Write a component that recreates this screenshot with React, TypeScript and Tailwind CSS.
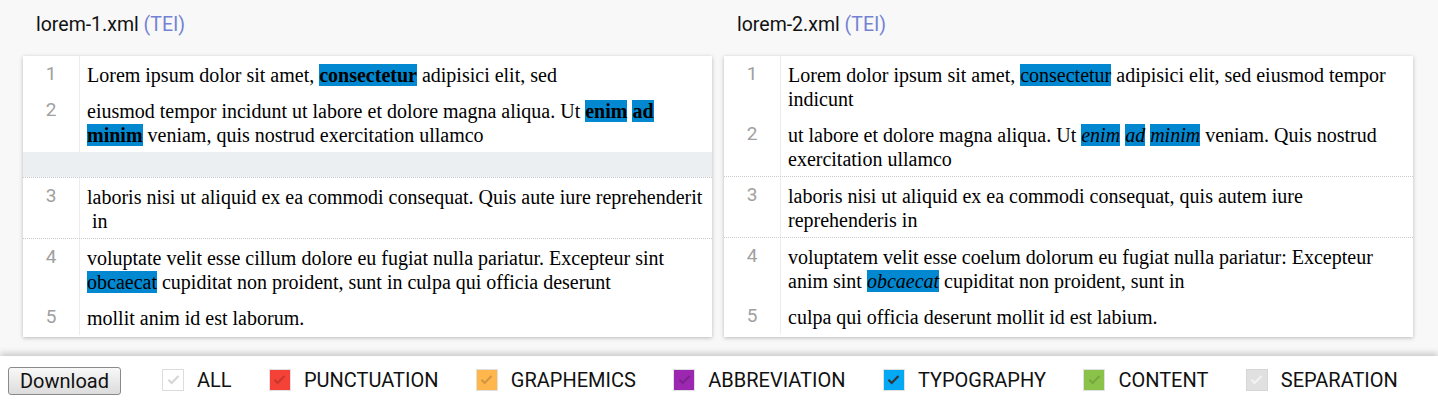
import React from "react";

type Seg = { t: string; hl?: "b" | "i" | "n" };
type Row = { n: number; lines: Seg[][] };
type Group = { rows: Row[]; spacer?: boolean };

const left: Group[] = [
  {
    spacer: true,
    rows: [
      {
        n: 1,
        lines: [[{ t: "Lorem ipsum dolor sit amet, " }, { t: "consectetur", hl: "b" }, { t: " adipisici elit, sed" }]],
      },
      {
        n: 2,
        lines: [
          [
            { t: "eiusmod tempor incidunt ut labore et dolore magna aliqua. Ut " },
            { t: "enim", hl: "b" },
            { t: " " },
            { t: "ad", hl: "b" },
          ],
          [{ t: "minim", hl: "b" }, { t: " veniam, quis nostrud exercitation ullamco" }],
        ],
      },
    ],
  },
  {
    rows: [
      {
        n: 3,
        lines: [
          [{ t: "laboris nisi ut aliquid ex ea commodi consequat. Quis aute iure reprehenderit" }],
          [{ t: "\u00a0in" }],
        ],
      },
    ],
  },
  {
    rows: [
      {
        n: 4,
        lines: [
          [{ t: "voluptate velit esse cillum dolore eu fugiat nulla pariatur. Excepteur sint" }],
          [{ t: "obcaecat", hl: "n" }, { t: " cupiditat non proident, sunt in culpa qui officia deserunt" }],
        ],
      },
      { n: 5, lines: [[{ t: "mollit anim id est laborum." }]] },
    ],
  },
];

const right: Group[] = [
  {
    rows: [
      {
        n: 1,
        lines: [
          [
            { t: "Lorem dolor ipsum sit amet, " },
            { t: "consectetur", hl: "n" },
            { t: " adipisici elit, sed eiusmod tempor" },
          ],
          [{ t: "indicunt" }],
        ],
      },
      {
        n: 2,
        lines: [
          [
            { t: "ut labore et dolore magna aliqua. Ut " },
            { t: "enim", hl: "i" },
            { t: " " },
            { t: "ad", hl: "i" },
            { t: " " },
            { t: "minim", hl: "i" },
            { t: " veniam. Quis nostrud" },
          ],
          [{ t: "exercitation ullamco" }],
        ],
      },
    ],
  },
  {
    rows: [
      {
        n: 3,
        lines: [[{ t: "laboris nisi ut aliquid ex ea commodi consequat, quis autem iure" }], [{ t: "reprehenderis in" }]],
      },
    ],
  },
  {
    rows: [
      {
        n: 4,
        lines: [
          [{ t: "voluptatem velit esse coelum dolorum eu fugiat nulla pariatur: Excepteur" }],
          [{ t: "anim sint " }, { t: "obcaecat", hl: "i" }, { t: " cupiditat non proident, sunt in" }],
        ],
      },
      { n: 5, lines: [[{ t: "culpa qui officia deserunt mollit id est labium." }]] },
    ],
  },
];

function Segment({ s }: { s: Seg }) {
  if (!s.hl) return <>{s.t}</>;
  const style = s.hl === "b" ? "font-bold" : s.hl === "i" ? "italic" : "";
  return <span className={`bg-[#0288d1] ${style}`}>{s.t}</span>;
}

function Panel({ title, groups }: { title: string; groups: Group[] }) {
  return (
    <div className="flex-1 min-w-0">
      <div className="h-[56px] pl-[13px] pt-[12px] text-[19.5px] leading-[26px] text-[#111]">
        {title} <span className="text-[#7482d2]">(TEI)</span>
      </div>
      <div className="bg-white shadow-[0_1px_4px_rgba(0,0,0,0.25)] h-[281px] font-['Liberation_Serif',serif] text-[20px] leading-[24px] text-black">
        {groups.map((g, gi) => (
          <div key={gi} className={gi > 0 ? "border-t border-dotted border-[#c8ccd0]" : ""}>
            {g.rows.map((r) => (
              <div key={r.n} className="flex">
                <div className="w-[57px] shrink-0 border-r border-[#ececec] text-center font-['Roboto',sans-serif] text-[19px] text-[#a0a0a0] pt-[6px] pb-[5px] leading-[24px]">
                  {r.n}
                </div>
                <div className="pl-[7px] pr-2 pt-[7px] pb-[5px]">
                  {r.lines.map((line, li) => (
                    <div key={li} className="whitespace-pre">
                      {line.map((s, si) => (
                        <Segment key={si} s={s} />
                      ))}
                    </div>
                  ))}
                </div>
              </div>
            ))}
            {g.spacer && <div className="h-[25px] bg-[#eceff1]" />}
          </div>
        ))}
      </div>
    </div>
  );
}

const boxes = [
  { label: "ALL", bg: "bg-white border-[#dcdcdc]", check: "#d6d6d6" },
  { label: "PUNCTUATION", bg: "bg-[#f44336] border-[#e0e0e0]", check: "rgba(0,0,0,0.18)" },
  { label: "GRAPHEMICS", bg: "bg-[#ffb74d] border-[#e0e0e0]", check: "rgba(0,0,0,0.18)" },
  { label: "ABBREVIATION", bg: "bg-[#9c27b0] border-[#e0e0e0]", check: "rgba(0,0,0,0.18)" },
  { label: "TYPOGRAPHY", bg: "bg-[#03a9f4] border-[#e0e0e0]", check: "#333333" },
  { label: "CONTENT", bg: "bg-[#8bc34a] border-[#e0e0e0]", check: "rgba(0,0,0,0.15)" },
  { label: "SEPARATION", bg: "bg-[#e0e0e0] border-[#d6d6d6]", check: "#f2f2f2" },
];

export default function App() {
  return (
    <div className="w-[1438px] h-[404px] bg-[#f8f8f8] flex flex-col font-['Roboto',sans-serif] overflow-hidden">
      <div className="flex gap-3 pl-[23px] pr-[25px] h-[356px]">
        <Panel title="lorem-1.xml" groups={left} />
        <Panel title="lorem-2.xml" groups={right} />
      </div>
      <div className="flex-1 bg-white shadow-[0_-3px_6px_rgba(0,0,0,0.18)] flex items-center pl-2">
        <button className="w-[113px] h-[28px] mt-[2px] rounded-[3px] border border-[#8a8a8a] bg-gradient-to-b from-[#f8f8f8] to-[#dcdcdc] text-[20px] text-[#111] leading-none">
          Download
        </button>
        <div className="flex items-center ml-[41px] mt-[-1px]">
          {boxes.map((b) => (
            <div key={b.label} className="flex items-center mr-[37.4px]">
              <span className={`w-[22px] h-[22px] border flex items-center justify-center ${b.bg}`}>
                <svg width="15" height="15" viewBox="0 0 24 24">
                  <path d="M4 12.5l5 5L20 6.5" fill="none" stroke={b.check} strokeWidth="3.5" />
                </svg>
              </span>
              <span className="ml-[13px] text-[20px] text-[#111]">{b.label}</span>
            </div>
          ))}
        </div>
      </div>
    </div>
  );
}
